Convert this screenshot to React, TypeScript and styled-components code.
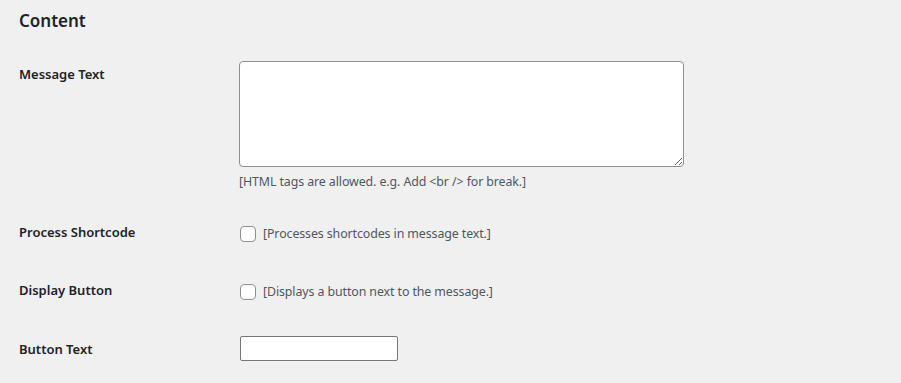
import React from "react";
import styled, { createGlobalStyle } from "styled-components";

const GlobalStyle = createGlobalStyle`
  html, body {
    margin: 0;
    padding: 0;
    background: #f0f0f1;
  }
  body {
    font-family: "Noto Sans", "Liberation Sans", sans-serif;
    font-size: 13px;
    color: #3c434a;
  }
`;

const Wrap = styled.div`
  padding: 0 20px 0 19px;
  width: 901px;
  height: 383px;
  box-sizing: border-box;
  overflow: hidden;
`;

const Heading = styled.h2`
  margin: 0;
  padding-top: 10px;
  height: 46px;
  box-sizing: border-box;
  font-size: 17px;
  line-height: 22px;
  font-weight: 600;
  color: #1d2327;
`;

const Row = styled.div<{ $height?: number }>`
  display: grid;
  grid-template-columns: 220px 1fr;
  align-items: start;
  height: ${(p) => (p.$height ? `${p.$height}px` : "auto")};
`;

const Label = styled.div`
  padding: 20px 10px 0 0;
  line-height: 17px;
  font-weight: 600;
  color: #1d2327;
`;

const Field = styled.div<{ $top: number }>`
  padding-top: ${(p) => p.$top}px;
  display: flex;
  flex-direction: column;
  align-items: flex-start;
`;

const Hint = styled.span`
  font-size: 12.4px;
  letter-spacing: -0.1px;
  color: #50575e;
`;

const Inline = styled.label`
  display: flex;
  align-items: center;
  gap: 7px;
  margin-left: 1px;
  line-height: 17px;
`;

const TextArea = styled.textarea`
  width: 445px;
  height: 106px;
  box-sizing: border-box;
  border: 1px solid #8c8f94;
  border-radius: 4px;
  background: #fff;
  margin: 0;
  padding: 2px 6px;
  font: inherit;
  color: #2c3338;
`;

const Description = styled.p`
  margin: 5px 0 0;
  line-height: 19px;
`;

const Checkbox = styled.input.attrs({ type: "checkbox" })`
  appearance: none;
  width: 16px;
  height: 16px;
  margin: 0;
  border: 1px solid #8c8f94;
  border-radius: 4px;
  background: #fff;
  box-sizing: border-box;
`;

const TextInput = styled.input.attrs({ type: "text" })`
  width: 158px;
  height: 25px;
  box-sizing: border-box;
  margin: 0 0 0 1px;
  border: 1px solid #767676;
  border-radius: 2px;
  background: #fff;
  padding: 1px 4px;
  font: inherit;
`;

export default function App() {
  return (
    <>
      <GlobalStyle />
      <Wrap>
        <Heading>Content</Heading>
        <Row $height={158}>
          <Label>Message Text</Label>
          <Field $top={15}>
            <TextArea />
            <Description>
              <Hint>[HTML tags are allowed. e.g. Add &lt;br /&gt; for break.]</Hint>
            </Description>
          </Field>
        </Row>
        <Row $height={58}>
          <Label>Process Shortcode</Label>
          <Field $top={21}>
            <Inline>
              <Checkbox />
              <Hint>[Processes shortcodes in message text.]</Hint>
            </Inline>
          </Field>
        </Row>
        <Row $height={59}>
          <Label>Display Button</Label>
          <Field $top={21}>
            <Inline>
              <Checkbox />
              <Hint>[Displays a button next to the message.]</Hint>
            </Inline>
          </Field>
        </Row>
        <Row $height={62}>
          <Label>Button Text</Label>
          <Field $top={15}>
            <TextInput />
          </Field>
        </Row>
      </Wrap>
    </>
  );
}
